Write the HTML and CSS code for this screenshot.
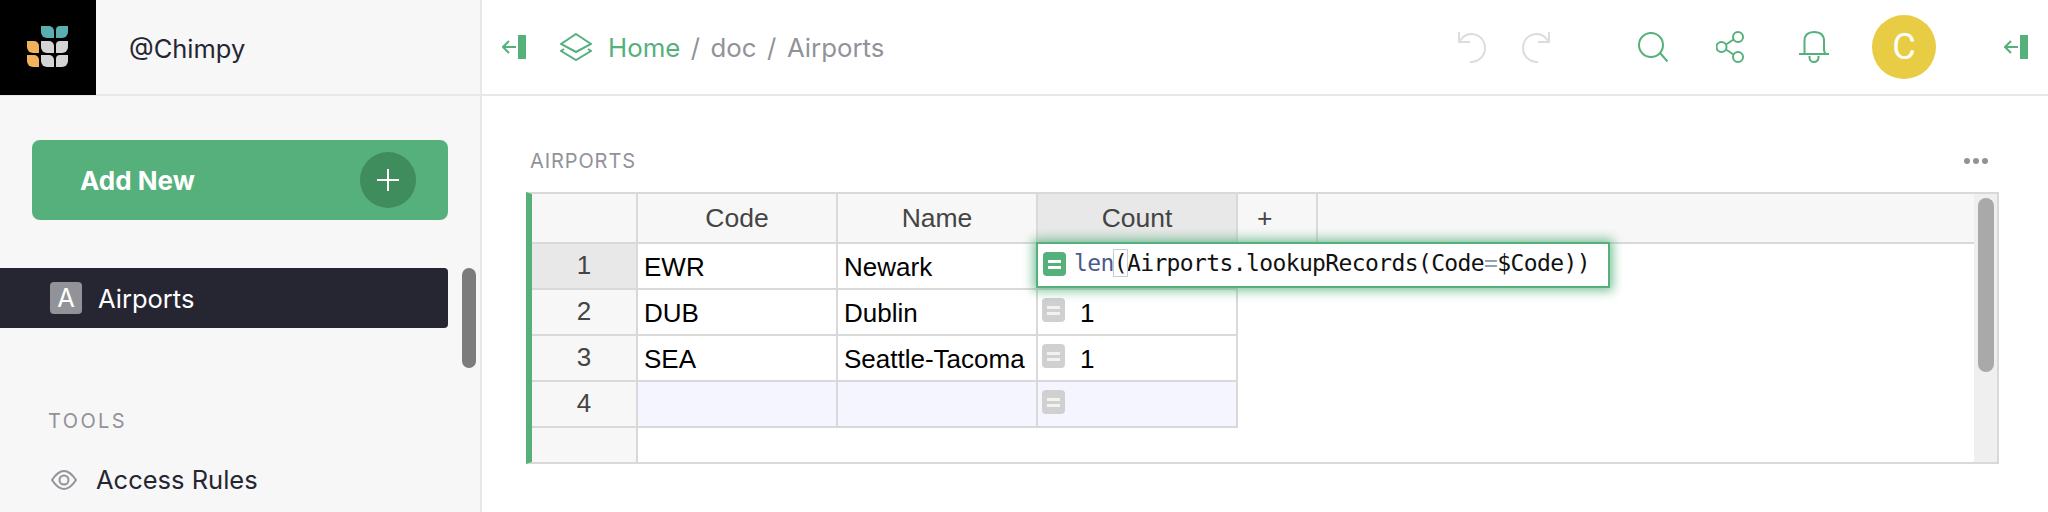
FILE: index.html
```html
<!DOCTYPE html>
<html lang="en">
<head>
    <meta charset="UTF-8">
    <title>Airports - doc</title>
    <link rel="stylesheet" href="styles.css">
</head>
<body>

<div class="sidebar">
    <div class="side-head">
        <div class="logo">
            <svg width="96" height="96" viewBox="0 0 96 96">
                <path class="leaf-teal" d="M41 27h8a5 5 0 0 1 5 5v7h-7a6 6 0 0 1-6-6z"/>
                <path class="leaf-teal" d="M68 27h-8a4 4 0 0 0-4 4v8h6a6 6 0 0 0 6-6z"/>
                <path class="leaf-orange" d="M27 42h7a5 5 0 0 1 5 5v7h-6a6 6 0 0 1-6-6z"/>
                <path class="leaf-orange" d="M27 56h7a5 5 0 0 1 5 5v7h-6a6 6 0 0 1-6-6z"/>
                <path class="leaf-grey" d="M41 42h8a5 5 0 0 1 5 5v7h-7a6 6 0 0 1-6-6z"/>
                <path class="leaf-grey" d="M41 56h8a5 5 0 0 1 5 5v7h-7a6 6 0 0 1-6-6z"/>
                <path class="leaf-grey" d="M68 42h-8a4 4 0 0 0-4 4v8h6a6 6 0 0 0 6-6z"/>
                <path class="leaf-grey" d="M68 56h-8a4 4 0 0 0-4 4v8h6a6 6 0 0 0 6-6z"/>
            </svg>
        </div>
        <div class="user">@Chimpy</div>
    </div>

    <div class="add-new">
        <span>Add New</span>
        <div class="add-circle">
            <svg width="24" height="24" viewBox="0 0 24 24"><path d="M12 1V23M1 12H23"/></svg>
        </div>
    </div>

    <div class="page-item">
        <div class="page-icon">A</div>
        <span>Airports</span>
    </div>

    <div class="tools-title">TOOLS</div>
    <div class="tool-item">
        <svg width="26" height="22" viewBox="0 0 26 22">
            <path d="M1 11C5 5 9 2 13 2S21 5 25 11C21 17 17 20 13 20S5 17 1 11Z"/>
            <circle cx="13" cy="11" r="4.5"/>
        </svg>
        <span>Access Rules</span>
    </div>

    <div class="side-scroll"></div>
</div>

<div class="main">
    <div class="topbar">
        <svg class="toggle" width="24" height="24" viewBox="0 0 24 24">
            <rect x="16" width="8" height="24"/>
            <path d="M14 12H1M7 6L1 12L7 18"/>
        </svg>
        <svg class="layers" width="32" height="28" viewBox="0 0 32 28">
            <path d="M16 1L31 11L16 19L1 11Z"/>
            <path d="M4 16L1 18L16 27L31 18L28 16"/>
        </svg>
        <div class="crumbs">
            <span class="crumb-home">Home</span>
            <span class="sep">/</span>
            <span>doc</span>
            <span class="sep">/</span>
            <span>Airports</span>
        </div>
        <div class="top-actions">
            <svg class="muted-icon" width="28" height="32" viewBox="0 0 28 32">
                <path d="M1 1V11H12M2 10C5 5 9 3 13 3C22 3 27 10 27 17C27 25 21 31 12 31"/>
            </svg>
            <svg class="muted-icon redo" width="28" height="32" viewBox="0 0 28 32">
                <path d="M27 1V11H16M26 10C23 5 19 3 15 3C6 3 1 10 1 17C1 25 7 31 16 31"/>
            </svg>
            <svg class="green-icon search" width="30" height="30" viewBox="0 0 30 30">
                <circle cx="13" cy="13" r="12"/>
                <path d="M22 21L29.5 29.5"/>
            </svg>
            <svg class="green-icon share" width="28" height="32" viewBox="0 0 28 32">
                <circle cx="22" cy="6" r="5"/>
                <circle cx="5.5" cy="16" r="5"/>
                <circle cx="22" cy="26" r="5"/>
                <path d="M10 13.5L17.5 8.5M10 18.5L17.5 23.5"/>
            </svg>
            <svg class="green-icon bell" width="32" height="32" viewBox="0 0 32 32">
                <path d="M1 23H31M6.5 23V10C6.5 4 10 1 16 1S26 4 26 10V18C26 20 26.5 22 28 23"/>
                <path d="M11.5 25V26.500A4.500 4.500 0 0 0 20.500 26.500V25"/>
            </svg>
            <div class="avatar">C</div>
            <svg class="toggle toggle-right" width="24" height="24" viewBox="0 0 24 24">
                <rect x="16" width="8" height="24"/>
                <path d="M14 12H1M7 6L1 12L7 18"/>
            </svg>
        </div>
    </div>

    <div class="content">
        <div class="section-head">
            <div class="section-title">AIRPORTS</div>
            <div class="dots"><i></i><i></i><i></i></div>
        </div>

        <div class="sheet">
            <div class="row head-row">
                <div class="num"></div>
                <div class="cell">Code</div>
                <div class="cell">Name</div>
                <div class="cell selected">Count</div>
                <div class="cell add-col">+</div>
                <div class="rest"></div>
            </div>
            <div class="row">
                <div class="num selected">1</div>
                <div class="cell">EWR</div>
                <div class="cell">Newark</div>
                <div class="cell"></div>
            </div>
            <div class="row">
                <div class="num">2</div>
                <div class="cell">DUB</div>
                <div class="cell">Dublin</div>
                <div class="cell"><div class="fx"><i></i><i></i></div>1</div>
            </div>
            <div class="row">
                <div class="num">3</div>
                <div class="cell">SEA</div>
                <div class="cell">Seattle-Tacoma</div>
                <div class="cell"><div class="fx"><i></i><i></i></div>1</div>
            </div>
            <div class="row new-row">
                <div class="num">4</div>
                <div class="cell"></div>
                <div class="cell"></div>
                <div class="cell"><div class="fx"><i></i><i></i></div></div>
            </div>
            <div class="filler"><div class="num"></div></div>

            <div class="sheet-scroll"><div class="thumb"></div></div>

            <div class="editor">
                <div class="fx fx-on"><i></i><i></i></div>
                <code><span class="fn">len</span><span class="match">(</span>Airports.lookupRecords(Code<span class="op">=</span>$Code))</code>
            </div>
        </div>
    </div>
</div>

</body>
</html>
```

FILE: styles.css
```css
* { box-sizing: border-box; }
html, body { margin: 0; height: 512px; overflow: hidden; }
body {
    display: flex;
    font-family: Inter, "Liberation Sans", sans-serif;
    font-size: 25.5px;
    color: #262633;
    background: #fff;
}

/* sidebar */
.sidebar {
    position: relative;
    width: 482px;
    height: 512px;
    flex: none;
    background: #f7f7f7;
    border-right: 2px solid #e8e8e8;
}
.side-head {
    display: flex;
    align-items: center;
    height: 96px;
    border-bottom: 2px solid #e8e8e8;
}
.logo { width: 96px; height: 96px; background: #000; flex: none; }
.logo svg { display: block; }
.leaf-teal { fill: #5aafb1; }
.leaf-orange { fill: #f0b35c; }
.leaf-grey { fill: #d4d4d4; }
.user { margin: 2px 0 0 33px; }

.add-new {
    display: flex;
    align-items: center;
    justify-content: space-between;
    width: 416px;
    height: 80px;
    margin: 44px 0 0 32px;
    padding: 0 32px 0 48px;
    border-radius: 8px;
    background: #55b07c;
    color: #fff;
    font-size: 26px;
    font-weight: 700;
}
.add-circle {
    display: flex;
    align-items: center;
    justify-content: center;
    width: 56px;
    height: 56px;
    border-radius: 50%;
    background: #3f8d5c;
}
.add-circle svg { fill: none; stroke: #fff; stroke-width: 2; }

.page-item {
    display: flex;
    align-items: center;
    width: 448px;
    height: 60px;
    margin-top: 48px;
    padding-left: 50px;
    border-radius: 0 4px 4px 0;
    background: #262633;
    color: #fff;
}
.page-icon {
    width: 32px;
    height: 32px;
    margin-right: 16px;
    border-radius: 4px;
    background: #929299;
    text-align: center;
    line-height: 32px;
}
.tools-title {
    margin: 81px 0 0 48px;
    font-size: 20px;
    line-height: 24px;
    letter-spacing: 2.4px;
    color: #929299;
}
.tool-item {
    display: flex;
    align-items: center;
    margin: 31px 0 0 51px;
    line-height: 32px;
}
.tool-item svg { margin-right: 19px; fill: none; stroke: #929299; stroke-width: 2; }
.side-scroll {
    position: absolute;
    left: 462px;
    top: 268px;
    width: 14px;
    height: 100px;
    border-radius: 7px;
    background: #7c7c7c;
}

/* top bar */
.main { flex: 1; min-width: 0; }
.topbar {
    display: flex;
    align-items: center;
    height: 96px;
    padding: 0 20px;
    border-bottom: 2px solid #e8e8e8;
}
.toggle { fill: none; stroke: #55b07c; stroke-width: 2; }
.toggle rect { fill: #55b07c; stroke: none; }
.layers { margin-left: 34px; fill: none; stroke: #55b07c; stroke-width: 2; }
.crumbs { display: flex; gap: 10.500px; margin-left: 16px; font-size: 25.800px; color: #929299; }
.crumb-home { color: #55b07c; }
.top-actions { display: flex; align-items: center; margin-left: auto; }
.muted-icon { fill: none; stroke: #dcdcdc; stroke-width: 2; }
.green-icon { fill: none; stroke: #55b07c; stroke-width: 2; }
.redo { margin-left: 36px; }
.search { margin-left: 88px; }
.share { margin-left: 48px; }
.bell { margin-left: 54px; }
.avatar {
    width: 64px;
    height: 64px;
    margin-left: 42px;
    border-radius: 50%;
    background: #e8cc44;
    color: #fff;
    font-family: Roboto, sans-serif;
    font-size: 36px;
    line-height: 64px;
    text-align: center;
}
.toggle-right { margin-left: 68px; }

/* section */
.content { padding: 0 49px 0 44px; }
.section-head {
    display: flex;
    align-items: center;
    justify-content: space-between;
    height: 96px;
    padding: 0 11px 0 4px;
}
.section-title { margin-top: 34px; font-size: 20px; letter-spacing: 0.9px; color: #929299; }
.dots { display: flex; gap: 3px; margin-top: 34px; }
.dots i { width: 6px; height: 6px; border-radius: 50%; background: #929299; }

/* grid */
.sheet {
    position: relative;
    width: 1473px;
    height: 272px;
    border: 2px solid #d9d9d9;
    border-left: 6px solid #55b07c;
    font-family: "Liberation Sans", sans-serif;
    font-size: 26px;
    color: #000;
}
.row { display: flex; height: 46px; }
.head-row { height: 50px; font-size: 26.500px; color: #444; }
.num {
    width: 106px;
    flex: none;
    border-right: 2px solid #d9d9d9;
    border-bottom: 2px solid #d9d9d9;
    background: #f7f7f7;
    color: #444;
    text-align: center;
    line-height: 42px;
}
.cell {
    display: flex;
    width: 200px;
    flex: none;
    padding-left: 6px;
    border-right: 2px solid #d9d9d9;
    border-bottom: 2px solid #d9d9d9;
    line-height: 46px;
}
.head-row .num, .head-row .cell, .rest { background: #f7f7f7; }
.head-row .cell { justify-content: center; padding-left: 0; line-height: 48px; }
.head-row .cell.add-col { justify-content: flex-start; width: 80px; padding-left: 19px; }
.head-row .cell.selected, .num.selected { background: #e8e8e8; }
.rest { flex: 1; margin-right: 23px; border-bottom: 2px solid #d9d9d9; }
.new-row .cell { background: #f4f5fe; }
.filler { height: 34px; }
.filler .num { height: 34px; border-bottom: 0; }

.fx {
    display: flex;
    flex-direction: column;
    justify-content: center;
    gap: 3px;
    width: 23px;
    height: 24px;
    margin: 8px 15px 0 -2px;
    border-radius: 4px;
    background: #d0d0d0;
}
.fx i { display: block; width: 13px; height: 3px; margin: 0 5px; background: #f2f2f2; }
.fx-on { flex: none; margin: 0; background: #55b07c; }
.fx-on i { background: #fff; }

.sheet-scroll {
    position: absolute;
    right: 0;
    top: 0;
    width: 23px;
    height: 268px;
    background: #efefef;
}
.thumb {
    width: 16px;
    height: 174px;
    margin: 4px 0 0 4px;
    border-radius: 8px;
    background: #a9a9a9;
}

.editor {
    position: absolute;
    left: 504px;
    top: 48px;
    display: flex;
    align-items: flex-start;
    gap: 8px;
    width: 574px;
    height: 46px;
    padding: 8px 0 0 5px;
    border: 2px solid #55b07c;
    background: #fff;
    box-shadow: 0 0 10px 3px rgba(85, 176, 124, 0.75);
}
.editor code {
    font-family: "DejaVu Sans Mono", monospace;
    font-size: 23px;
    letter-spacing: -0.62px;
    line-height: 22px;
    color: #111;
}
.fn { color: #4a5a8c; }
.op { color: #8ba3b5; }
.match { outline: 1px solid #ccc; }
```
